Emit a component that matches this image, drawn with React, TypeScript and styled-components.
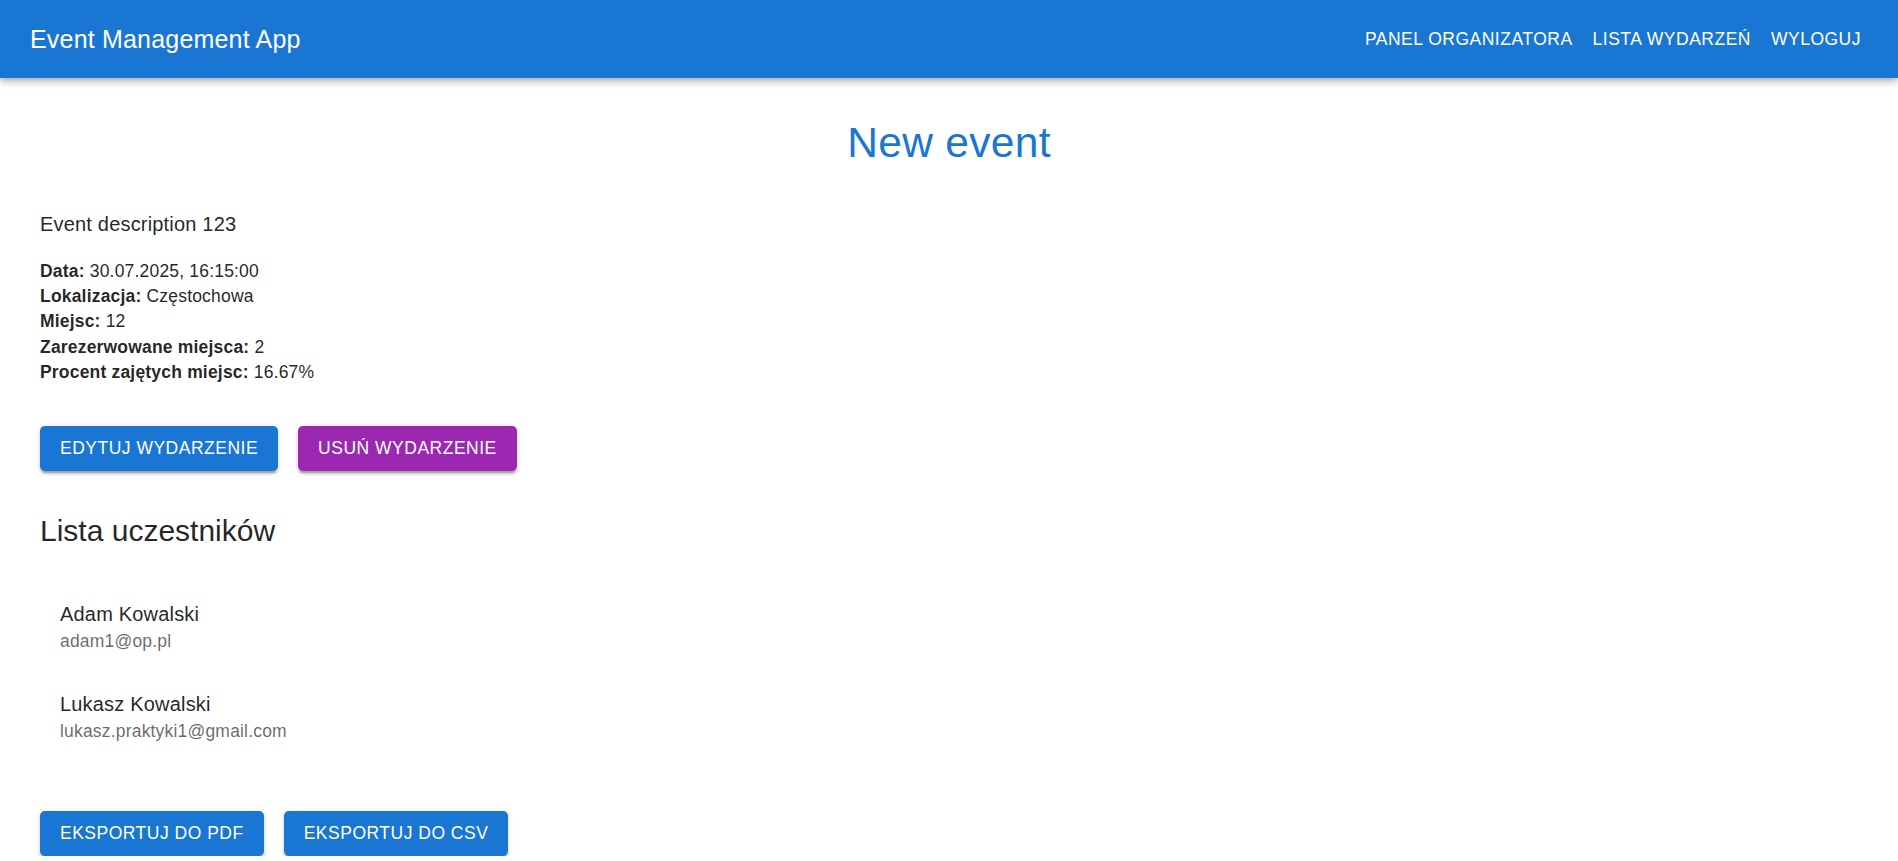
import React from "react";
import styled, { createGlobalStyle } from "styled-components";

const GlobalStyle = createGlobalStyle`
  html, body {
    margin: 0;
    padding: 0;
    overflow: hidden;
    background: #ffffff;
  }
  body {
    font-family: "Liberation Sans", Arial, sans-serif;
    color: rgba(0, 0, 0, 0.87);
    -webkit-font-smoothing: antialiased;
  }
  * { box-sizing: border-box; }
`;

const AppBar = styled.header`
  display: flex;
  align-items: center;
  justify-content: space-between;
  height: 78px;
  padding: 0 27px 0 30px;
  background: #1976d2;
  color: #fff;
  box-shadow: 0px 2.5px 5px -1.25px rgba(0, 0, 0, 0.2),
    0px 5px 6.25px 0px rgba(0, 0, 0, 0.14),
    0px 1.25px 12.5px 0px rgba(0, 0, 0, 0.12);
  position: relative;
  z-index: 1;
`;

const Brand = styled.div`
  font-size: 25px;
  font-weight: 500;
  letter-spacing: 0.0075em;
  line-height: 1.6;
`;

const Nav = styled.nav`
  display: flex;
  align-items: center;
`;

const NavButton = styled.button`
  background: transparent;
  border: none;
  color: #fff;
  font-family: inherit;
  font-size: 17.5px;
  font-weight: 500;
  letter-spacing: 0.5px;
  line-height: 30.6px;
  text-transform: uppercase;
  padding: 7.5px 10px;
  border-radius: 5px;
  cursor: pointer;
`;

const Main = styled.main`
  padding: 39px 40px 0;
`;

const Title = styled.h1`
  margin: 0 0 39px;
  text-align: center;
  font-size: 42.5px;
  font-weight: 400;
  line-height: 52.5px;
  letter-spacing: 0.00735em;
  color: #1976d2;
`;

const Description = styled.p`
  margin: 0 0 20px;
  font-size: 20px;
  line-height: 30px;
  letter-spacing: 0.00938em;
`;

const Details = styled.div`
  display: flex;
  flex-direction: column;
  font-size: 17.5px;
  line-height: 25.4px;
  letter-spacing: 0.01071em;
`;

const DetailLine = styled.div``;

const Label = styled.strong`
  font-weight: 700;
`;

const ButtonRow = styled.div<{ $mt: number }>`
  display: flex;
  gap: 20px;
  margin-top: ${(p) => p.$mt}px;
`;

const ActionButton = styled.button<{ $tone: "primary" | "secondary" }>`
  background: ${(p) => (p.$tone === "primary" ? "#1976d2" : "#9c27b0")};
  color: #fff;
  border: none;
  border-radius: 5px;
  font-family: inherit;
  font-size: 17.5px;
  font-weight: 500;
  letter-spacing: 0.5px;
  line-height: 30.625px;
  text-transform: uppercase;
  padding: 7.5px 20px;
  cursor: pointer;
  box-shadow: 0px 3.75px 1.25px -2.5px rgba(0, 0, 0, 0.2),
    0px 2.5px 2.5px 0px rgba(0, 0, 0, 0.14),
    0px 1.25px 6.25px 0px rgba(0, 0, 0, 0.12);
`;

const SectionHeading = styled.h2`
  margin: 40px 0 20px;
  font-size: 30px;
  font-weight: 400;
  line-height: 40px;
`;

const ParticipantList = styled.ul`
  list-style: none;
  margin: 0;
  padding: 10px 0;
`;

const ParticipantItem = styled.li`
  display: flex;
  flex-direction: column;
  padding: 17.5px 20px;
`;

const Name = styled.span`
  font-size: 20px;
  line-height: 30px;
  letter-spacing: 0.00938em;
`;

const Email = styled.span`
  font-size: 17.5px;
  line-height: 25px;
  letter-spacing: 0.01071em;
  color: rgba(0, 0, 0, 0.6);
`;

const details: [string, string][] = [
  ["Data:", "30.07.2025, 16:15:00"],
  ["Lokalizacja:", "Częstochowa"],
  ["Miejsc:", "12"],
  ["Zarezerwowane miejsca:", "2"],
  ["Procent zajętych miejsc:", "16.67%"],
];

const participants = [
  { name: "Adam Kowalski", email: "adam1@op.pl" },
  { name: "Lukasz Kowalski", email: "lukasz.praktyki1@gmail.com" },
];

export default function App() {
  return (
    <>
      <GlobalStyle />
      <AppBar>
        <Brand>Event Management App</Brand>
        <Nav>
          <NavButton>Panel organizatora</NavButton>
          <NavButton>Lista wydarzeń</NavButton>
          <NavButton>Wyloguj</NavButton>
        </Nav>
      </AppBar>
      <Main>
        <Title>New event</Title>
        <Description>Event description 123</Description>
        <Details>
          {details.map(([label, value]) => (
            <DetailLine key={label}>
              <Label>{label}</Label> {value}
            </DetailLine>
          ))}
        </Details>
        <ButtonRow $mt={40}>
          <ActionButton $tone="primary">Edytuj wydarzenie</ActionButton>
          <ActionButton $tone="secondary">Usuń wydarzenie</ActionButton>
        </ButtonRow>
        <SectionHeading>Lista uczestników</SectionHeading>
        <ParticipantList>
          {participants.map((p) => (
            <ParticipantItem key={p.email}>
              <Name>{p.name}</Name>
              <Email>{p.email}</Email>
            </ParticipantItem>
          ))}
        </ParticipantList>
        <ButtonRow $mt={39.5}>
          <ActionButton $tone="primary">Eksportuj do PDF</ActionButton>
          <ActionButton $tone="primary">Eksportuj do CSV</ActionButton>
        </ButtonRow>
      </Main>
    </>
  );
}
